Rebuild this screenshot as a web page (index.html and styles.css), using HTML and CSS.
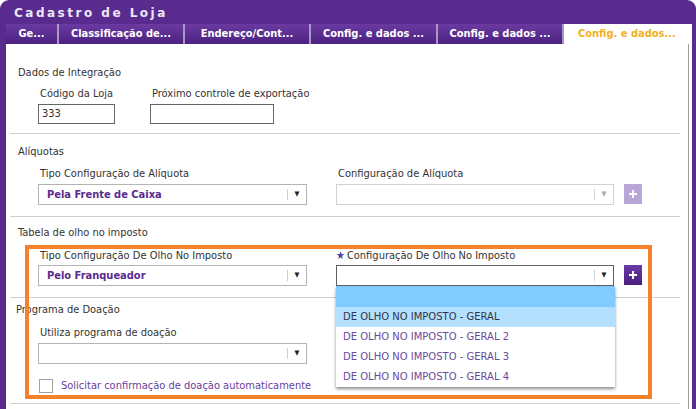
FILE: index.html
```html
<!DOCTYPE html>
<html lang="pt-BR">
<head>
    <meta charset="UTF-8">
    <title>Cadastro de Loja</title>
    <link rel="stylesheet" href="styles.css">
</head>
<body>
    <div class="window">
        <div class="titlebar">Cadastro de Loja</div>
        <div class="tabs">
            <div class="tab tab-ge">Ge...</div>
            <div class="tab">Classificação de...</div>
            <div class="tab">Endereço/Cont...</div>
            <div class="tab tab-wide">Config. e dados ...</div>
            <div class="tab">Config. e dados ...</div>
            <div class="tab active">Config. e dados...</div>
        </div>
        <div class="content">
            <div class="panel">
                <div class="group g1">
                    <div class="group-title">Dados de Integração</div>
                    <div class="fields">
                        <div class="field f-code">
                            <label>Código da Loja</label>
                            <div class="input">333</div>
                        </div>
                        <div class="field f-next">
                            <label>Próximo controle de exportação</label>
                            <div class="input"></div>
                        </div>
                    </div>
                </div>

                <div class="group g2">
                    <div class="group-title">Alíquotas</div>
                    <div class="fields">
                        <div class="field f-left">
                            <label>Tipo Configuração de Alíquota</label>
                            <div class="select">
                                <span class="value">Pela Frente de Caixa</span>
                                <span class="arrow">▼</span>
                            </div>
                        </div>
                        <div class="field f-right">
                            <label>Configuração de Alíquota</label>
                            <div class="select-row">
                                <div class="select disabled">
                                    <span class="value"></span>
                                    <span class="arrow">▼</span>
                                </div>
                                <button class="add disabled">
                                    <svg width="10" height="10" viewBox="0 0 10 10"><path d="M5 1v8M1 5h8" stroke="#fff" stroke-width="2"/></svg>
                                </button>
                            </div>
                        </div>
                    </div>
                </div>

                <div class="group g3">
                    <div class="group-title">Tabela de olho no imposto</div>
                    <div class="fields">
                        <div class="field f-left">
                            <label>Tipo Configuração De Olho No Imposto</label>
                            <div class="select">
                                <span class="value">Pelo Franqueador</span>
                                <span class="arrow">▼</span>
                            </div>
                        </div>
                        <div class="field f-right">
                            <label class="required"><span class="star">★</span>Configuração De Olho No Imposto</label>
                            <div class="select-row">
                                <div class="select open">
                                    <span class="value"></span>
                                    <span class="arrow">▼</span>
                                    <ul class="dropdown">
                                        <li class="hover"></li>
                                        <li class="selected">DE OLHO NO IMPOSTO - GERAL</li>
                                        <li>DE OLHO NO IMPOSTO - GERAL 2</li>
                                        <li>DE OLHO NO IMPOSTO - GERAL 3</li>
                                        <li>DE OLHO NO IMPOSTO - GERAL 4</li>
                                    </ul>
                                </div>
                                <button class="add">
                                    <svg width="10" height="10" viewBox="0 0 10 10"><path d="M5 1v8M1 5h8" stroke="#fff" stroke-width="2"/></svg>
                                </button>
                            </div>
                        </div>
                    </div>
                </div>

                <div class="group g4">
                    <div class="group-title">Programa de Doação</div>
                    <div class="fields">
                        <div class="field f-left">
                            <label>Utiliza programa de doação</label>
                            <div class="select">
                                <span class="value"></span>
                                <span class="arrow">▼</span>
                            </div>
                        </div>
                    </div>
                    <div class="check-row">
                        <span class="checkbox"></span>
                        <span class="check-label">Solicitar confirmação de doação automaticamente</span>
                    </div>
                </div>
            </div>
        </div>
        <div class="highlight-box"></div>
    </div>
</body>
</html>
```

FILE: styles.css
```css
body {
    margin: 0;
    font-family: "DejaVu Sans Condensed", "DejaVu Sans", sans-serif;
    font-size: 11px;
    color: #333;
    background: #fff;
}
.window {
    position: relative;
    width: 696px;
    height: 409px;
    box-sizing: border-box;
    padding: 0 4px 0 6px;
    background-color: #5a2b8f;
    border-radius: 9px 9px 0 0;
    display: flex;
    flex-direction: column;
    overflow: hidden;
}
.titlebar {
    height: 24px;
    line-height: 26px;
    padding-left: 8px;
    color: #ece6f4;
    font-family: "DejaVu Sans", sans-serif;
    font-weight: bold;
    font-size: 12px;
    letter-spacing: 2.5px;
}
.tabs {
    display: flex;
    gap: 2px;
    height: 20px;
    background-color: #a898c4;
}
.tab {
    width: 124px;
    line-height: 20px;
    text-align: center;
    color: #fff;
    font-weight: bold;
    background: linear-gradient(#6a3aa1, #4c2181);
}
.tab-ge {
    width: 51px;
}
.tab-wide {
    width: 125px;
}
.tab.active {
    flex: 1;
    background: #fff;
    color: #f2b01e;
    text-align: left;
    padding-left: 14px;
}
.content {
    flex: 1;
    background-color: #fff;
    padding-right: 3px;
}
.panel {
    height: 100%;
    border-right: 1px solid #9d9d9d;
    padding-top: 10px;
    box-sizing: border-box;
}
.group {
    margin: 0 8px 0 4px;
    border-bottom: 1px solid #cfcfcf;
}
.group-title {
    line-height: 16px;
    padding-left: 8px;
}
.fields {
    display: flex;
    gap: 29px;
    padding-left: 28px;
}
.field label {
    display: block;
    line-height: 16px;
    padding-left: 2px;
    margin-bottom: 2px;
}
.g1 {
    padding: 11px 0 9px;
}
.g1 .group-title {
    margin-bottom: 5px;
}
.g1 .fields {
    gap: 35px;
}
.g2 {
    padding: 10px 0 11px;
}
.g2 .group-title {
    margin-bottom: 6px;
}
.g3 {
    padding: 8px 0 11px;
}
.g3 .group-title {
    margin-bottom: 7px;
}
.g3 .field label {
    margin-bottom: 1px;
}
.g4 {
    padding: 4px 0 9px;
}
.g4 .group-title {
    padding-left: 6px;
    margin-bottom: 7px;
}
.input {
    height: 20px;
    box-sizing: border-box;
    border: 1px solid #666;
    padding-left: 3px;
    line-height: 18px;
}
.f-code .input {
    width: 77px;
}
.f-next .input {
    width: 124px;
}
.f-left {
    width: 269px;
}
.select-row {
    display: flex;
    gap: 10px;
}
.select {
    position: relative;
    display: flex;
    height: 21px;
    box-sizing: border-box;
    border: 1px solid #b4b4b4;
    background: #fff;
}
.f-right .select {
    width: 278px;
}
.select .value {
    flex: 1;
    padding-left: 8px;
    line-height: 19px;
    font-weight: bold;
    color: #5a2b8f;
}
.select .arrow {
    width: 18px;
    margin: 4px 0;
    border-left: 1px solid #cfcfcf;
    text-align: center;
    font-size: 7px;
    line-height: 11px;
    color: #222;
}
.select.disabled {
    border-color: #d2d2d2;
}
.select.disabled .arrow {
    color: #aaa;
}
.select.open {
    border-color: #5f5f5f;
}
.dropdown {
    position: absolute;
    top: 20px;
    left: -1px;
    width: 279px;
    margin: 0;
    padding: 0;
    list-style: none;
    background: #fff;
    box-shadow: 0 2px 3px rgba(0, 0, 0, 0.45);
    z-index: 5;
}
.dropdown li {
    height: 20px;
    line-height: 20px;
    padding-left: 7px;
    font-family: "DejaVu Sans", sans-serif;
    font-size: 10px;
    color: #6a4a9c;
}
.dropdown li.hover {
    height: 21px;
    background-color: #80cbff;
}
.dropdown li.selected {
    background-color: #b4e0ff;
    color: #334;
}
.add {
    width: 18px;
    height: 20px;
    padding: 0;
    border: none;
    background: linear-gradient(#6b3ba4, #4b1f80);
    display: flex;
    align-items: center;
    justify-content: center;
}
.add.disabled {
    background: #b9a6d6;
}
.star {
    color: #4a45a0;
    font-size: 11px;
    line-height: 12px;
    margin-right: 2px;
    margin-left: -2px;
}
.check-row {
    display: flex;
    align-items: center;
    gap: 8px;
    padding: 14px 0 0 29px;
}
.checkbox {
    width: 14px;
    height: 14px;
    box-sizing: border-box;
    border: 1px solid #a0a0a0;
    background: #fff;
}
.check-label {
    color: #6a3d9e;
    line-height: 16px;
}
.highlight-box {
    position: absolute;
    left: 25px;
    top: 245px;
    width: 627px;
    height: 154px;
    box-sizing: border-box;
    border: 4px solid #f5822a;
    z-index: 10;
    pointer-events: none;
}
```
